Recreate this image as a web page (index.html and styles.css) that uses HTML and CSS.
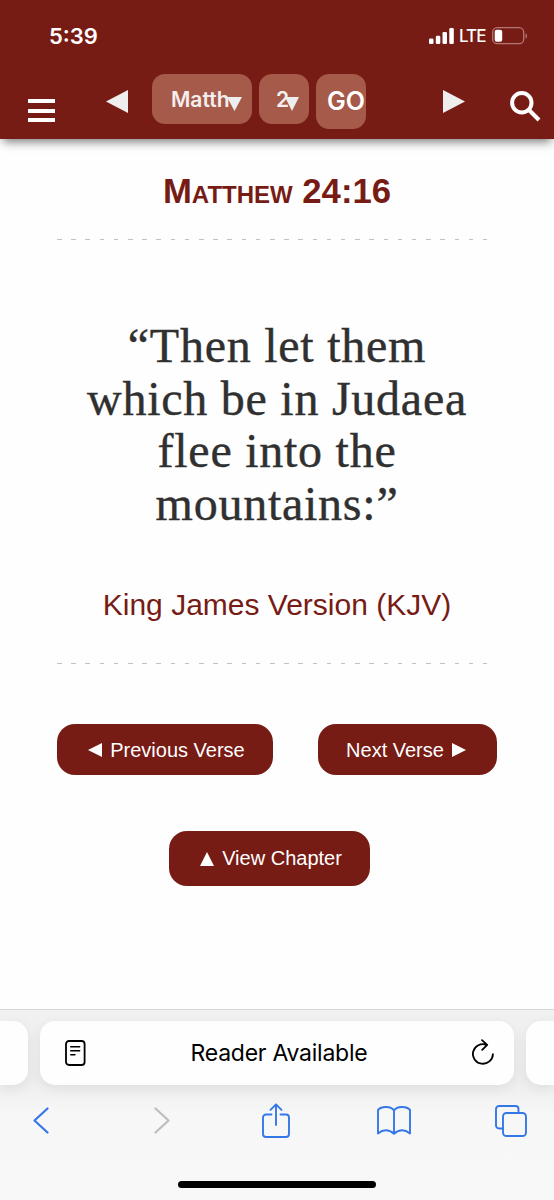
FILE: index.html
```html
<!DOCTYPE html>
<html lang="en">
<head>
  <meta charset="utf-8">
  <title>Matthew 24:16</title>
  <link rel="stylesheet" href="styles.css">
</head>
<body>
  <header class="header">
    <div class="status-bar">
      <span class="time">5:39</span>
      <div class="status-icons">
        <svg class="signal" width="25" height="16" viewBox="0 0 25 16" fill="#fff">
          <rect x="0" y="10.5" width="4.5" height="5.5" rx="1.3"/>
          <rect x="6.8" y="7.7" width="4.5" height="8.3" rx="1.3"/>
          <rect x="13.5" y="4" width="4.5" height="12" rx="1.3"/>
          <rect x="20.3" y="0" width="4.5" height="16" rx="1.3"/>
        </svg>
        <span class="network">LTE</span>
        <svg class="battery" width="36" height="18" viewBox="0 0 36 18">
          <rect x=".7" y=".7" width="31" height="16" rx="4.5" fill="none" stroke="#b57773" stroke-width="1.3"/>
          <rect x="2.7" y="2.7" width="7.5" height="12" rx="2" fill="#fff"/>
          <path d="M33.5 6.2c2 .7 2 4.6 0 5.3z" fill="#b57773"/>
        </svg>
      </div>
    </div>
    <nav class="nav">
      <a href="#" class="menu"><span></span><span></span><span></span></a>
      <a href="#" class="arrow arrow-left"><svg width="22" height="23" viewBox="0 0 22 23"><path d="M22 0v23L0 11.5z" fill="#eee"/></svg></a>
      <div class="select select-book">Matth<svg class="caret" width="15" height="14" viewBox="0 0 15 14"><path d="M0 0h15L7.5 14z" fill="#eee"/></svg></div>
      <div class="select select-chapter">2<svg class="caret" width="14" height="14" viewBox="0 0 14 14"><path d="M0 0h14L7 14z" fill="#eee"/></svg></div>
      <button class="go">GO</button>
      <a href="#" class="arrow arrow-right"><svg width="22" height="23" viewBox="0 0 22 23"><path d="M0 0v23l22-11.5z" fill="#eee"/></svg></a>
      <a href="#" class="search">
        <svg width="31" height="31" viewBox="0 0 31 31" fill="none" stroke="#fff" stroke-width="4">
          <circle cx="11.8" cy="11.8" r="9.7"/>
          <path d="M18.5 18.5L29 29"/>
        </svg>
      </a>
    </nav>
  </header>

  <main class="content">
    <h1>Matthew 24:16</h1>
    <div class="divider"></div>
    <p class="verse">“Then let them<br>which be in Judaea<br>flee into the<br>mountains:”</p>
    <p class="version">King James Version (KJV)</p>
    <div class="divider"></div>
    <div class="buttons">
      <a href="#" class="button previous"><svg width="14" height="14" viewBox="0 0 14 14"><path d="M14 0v14L0 7z" fill="#fff"/></svg>Previous Verse</a>
      <a href="#" class="button next">Next Verse<svg width="14" height="14" viewBox="0 0 14 14"><path d="M0 0v14l14-7z" fill="#fff"/></svg></a>
    </div>
    <a href="#" class="button chapter"><svg width="14" height="14" viewBox="0 0 14 14"><path d="M7 0l7 14H0z" fill="#fff"/></svg>View Chapter</a>
  </main>

  <footer class="browser">
    <div class="tabs">
      <div class="tab tab-before"></div>
      <div class="tab address">
        <svg width="21" height="26" viewBox="0 0 21 26" fill="none" stroke="#000" stroke-linecap="round">
          <rect x="1" y="1" width="18.6" height="24" rx="3" stroke-width="1.8"/>
          <path d="M5.700 6.700h9M5.700 10.700h9M5.700 14.700h4.300" stroke-width="1.4"/>
        </svg>
        <span>Reader Available</span>
        <svg class="reload" width="22" height="26" viewBox="0 0 22 26" fill="none" stroke="#000" stroke-width="1.8" stroke-linecap="round" stroke-linejoin="round">
          <path d="M14.500 5.800A10 9.800 0 1 0 20.900 15.200M10 1.200l5.200 4.700-5 5"/>
        </svg>
      </div>
      <div class="tab tab-after"></div>
    </div>
    <div class="toolbar">
      <svg height="27" viewBox="0 0 16 27" fill="none" stroke="#3478e8" stroke-width="2.2" stroke-linecap="round" stroke-linejoin="round"><path d="M14.500 1.500L1.500 13.500l13 12"/></svg>
      <svg class="forward" height="27" viewBox="0 0 16 27" fill="none" stroke="#bdbdbf" stroke-width="2.2" stroke-linecap="round" stroke-linejoin="round"><path d="M1.500 1.500l13 12-13 12"/></svg>
      <svg height="35" viewBox="0 0 28 35" fill="none" stroke="#3478e8" stroke-width="1.9" stroke-linecap="round" stroke-linejoin="round"><path d="M9.500 11.500H4a3 3 0 0 0-3 3V31a3 3 0 0 0 3 3h20a3 3 0 0 0 3-3V14.500a3 3 0 0 0-3-3h-5.500M14 22V1.500M8.500 6.800L14 1.300l5.500 5.500"/></svg>
      <svg height="29" viewBox="0 0 34 29" fill="none" stroke="#3478e8" stroke-width="1.9" stroke-linejoin="round"><path d="M17 4.500C14 0 4.500 0 1 4v23.500c5-4 11-4 16 .3 5-4.300 11-4.300 16-.3V4C29.500 0 20 0 17 4.500zM17 4.500v23"/></svg>
      <svg height="32" viewBox="0 0 32 32" fill="none" stroke="#3478e8" stroke-width="1.9" stroke-linecap="round"><path d="M7.500 23.500H4a3 3 0 0 1-3-3V4a3 3 0 0 1 3-3h16.500a3 3 0 0 1 3 3v3.500"/><rect x="8" y="8" width="23" height="23" rx="3.5"/></svg>
    </div>
    <div class="home-bar"></div>
  </footer>
</body>
</html>
```

FILE: styles.css
```css
* {
  box-sizing: border-box;
}

body {
  margin: 0;
  width: 554px;
  height: 1200px;
  display: flex;
  flex-direction: column;
  background: #fefefe;
  font-family: "Liberation Sans", Arial, sans-serif;
  overflow: hidden;
}

svg {
  display: block;
  flex-shrink: 0;
}

a {
  text-decoration: none;
}

.header {
  height: 139px;
  background: #771b15;
  box-shadow: 0 6px 9px -3px rgba(0, 0, 0, 0.5);
  color: #fff;
  font-family: Inter, sans-serif;
}

.status-bar {
  height: 74px;
  padding: 23px 26px 0 49px;
  display: flex;
  justify-content: space-between;
  align-items: flex-start;
}

.time {
  font-size: 22px;
  line-height: 26px;
  font-weight: 600;
}

.status-icons {
  display: flex;
  align-items: center;
  padding-top: 3px;
}

.network {
  margin: 0 7px 0 5px;
  width: 26px;
  font-size: 17px;
  line-height: 20px;
  letter-spacing: -0.9px;
  font-weight: 500;
}

.nav {
  display: flex;
  align-items: flex-start;
  padding-left: 28px;
}

.menu {
  width: 27px;
  margin-top: 25px;
  display: flex;
  flex-direction: column;
  gap: 5.5px;
}

.menu span {
  height: 4px;
  background: #fff;
}

.arrow {
  margin-top: 15.5px;
}

.arrow-left {
  margin-left: 51px;
}

.arrow-right {
  margin-left: 77px;
}

.select,
.go {
  height: 50px;
  border: 0;
  border-radius: 13px;
  background: #a65a49;
  color: #f4eeee;
  font-family: Inter, sans-serif;
  font-size: 21px;
  line-height: 51px;
  font-weight: 600;
}

.select {
  position: relative;
}

.select-book {
  width: 100px;
  margin-left: 24px;
  padding-left: 19px;
}

.select-chapter {
  width: 50px;
  margin-left: 7px;
  padding-left: 17px;
}

.caret {
  position: absolute;
  top: 23px;
  right: 10px;
}

.go {
  width: 50px;
  height: 55px;
  margin-left: 7px;
  padding: 0 0 0 11px;
  color: #fff;
  font-size: 25px;
  line-height: 55px;
  text-align: left;
  overflow: hidden;
}

.search {
  margin: 16.5px 0 0 45px;
}

.content {
  flex: 1;
  padding: 32px 57px 0;
  display: flex;
  flex-direction: column;
}

h1 {
  margin: 0;
  color: #771b15;
  font-size: 34.7px;
  line-height: 40px;
  font-variant: small-caps;
  text-align: center;
}

.divider {
  width: 431px;
  height: 1px;
  margin-top: 28px;
  background: repeating-linear-gradient(90deg, #c2c2c2 0 4.5px, transparent 4.5px 14.2px);
}

.verse {
  margin: 80px 0 0;
  color: #303030;
  font-family: Georgia, "Liberation Serif", serif;
  font-size: 48px;
  line-height: 52.5px;
  letter-spacing: 0.75px;
  -webkit-text-stroke: 0.4px #303030;
  text-align: center;
}

.version {
  margin: 57px 0 0;
  color: #771b15;
  font-size: 30px;
  line-height: 36px;
  text-align: center;
}

.version + .divider {
  margin-top: 40px;
}

.buttons {
  display: flex;
  justify-content: space-between;
  width: 440px;
  margin-top: 60px;
}

.button {
  height: 51px;
  display: flex;
  align-items: center;
  justify-content: center;
  gap: 8px;
  padding-top: 1px;
  background: #771b15;
  border-radius: 18px;
  color: #fff;
  font-size: 20px;
}

.previous {
  width: 216px;
  padding-left: 3px;
}

.next {
  width: 179px;
  padding-right: 3px;
}

.chapter {
  width: 201px;
  height: 55px;
  margin: 56px 0 0 112px;
  padding: 0 0 0 3px;
}

.browser {
  height: 191px;
  border-top: 1px solid #d7d7d7;
  background: linear-gradient(#f1f1f1 0, #eeeeee 70px, #f7f7f7 105px, #f8f8f8);
}

.tabs {
  display: flex;
  gap: 12px;
  padding-top: 11px;
}

.tab {
  height: 64px;
  background: #fefefe;
  border-radius: 15px;
  box-shadow: 0 4px 14px rgba(0, 0, 0, 0.07);
}

.tab-before {
  width: 28px;
  border-radius: 0 15px 15px 0;
}

.tab-after {
  width: 28px;
  border-radius: 15px 0 0 15px;
}

.address {
  width: 474px;
  padding: 0 20px 0 25px;
  display: flex;
  align-items: center;
  justify-content: space-between;
  font-family: Inter, sans-serif;
  font-size: 23px;
  letter-spacing: -0.25px;
}

.reload {
  margin-bottom: 3px;
}

.toolbar {
  display: flex;
  align-items: center;
  justify-content: space-between;
  height: 71px;
  padding: 0 26px 0 24px;
}

.toolbar svg {
  width: 34px;
}

.toolbar .forward {
  margin: 0 -3px 0 3px;
}

.home-bar {
  width: 198px;
  height: 7px;
  margin: 25px auto 0;
  border-radius: 4px;
  background: #000;
}
```
